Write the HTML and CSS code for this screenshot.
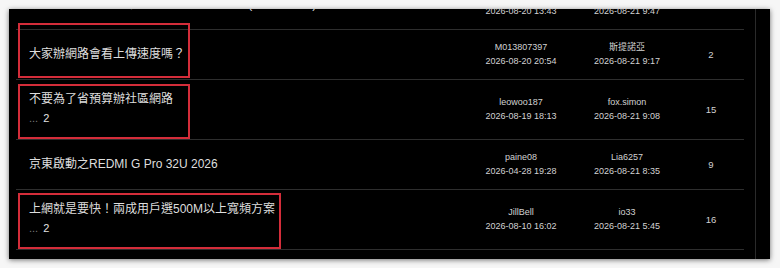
FILE: index.html
```html
<!DOCTYPE html>
<html lang="zh-Hant">
<head>
<meta charset="utf-8">
<title>討論區</title>
<link rel="stylesheet" href="styles.css">
</head>
<body>
<div class="panel">
  <div class="viewport">
    <div class="list">
      <div class="row">
        <div class="title">請問中華光世代網路升級後速度變慢怎辦 (附測速結果)</div>
        <div class="meta"><div>kevin0912</div><div>2026-08-20 13:43</div></div>
        <div class="meta"><div>netuser</div><div>2026-08-21 9:47</div></div>
        <div class="count">4</div>
      </div>
      <div class="row">
        <div class="title">大家辦網路會看上傳速度嗎？</div>
        <div class="meta"><div>M013807397</div><div>2026-08-20 20:54</div></div>
        <div class="meta"><div>斯提諾亞</div><div>2026-08-21 9:17</div></div>
        <div class="count">2</div>
        <span class="mark mark-a"></span>
      </div>
      <div class="row">
        <div class="title">不要為了省預算辦社區網路<div class="pages"><span class="dots">...</span> <span class="pg">2</span></div></div>
        <div class="meta"><div>leowoo187</div><div>2026-08-19 18:13</div></div>
        <div class="meta"><div>fox.simon</div><div>2026-08-21 9:08</div></div>
        <div class="count">15</div>
        <span class="mark mark-b"></span>
      </div>
      <div class="row">
        <div class="title">京東啟動之REDMI G Pro 32U 2026</div>
        <div class="meta"><div>paine08</div><div>2026-04-28 19:28</div></div>
        <div class="meta"><div>Lia6257</div><div>2026-08-21 8:35</div></div>
        <div class="count">9</div>
      </div>
      <div class="row">
        <div class="title">上網就是要快！兩成用戶選500M以上寬頻方案<div class="pages"><span class="dots">...</span> <span class="pg">2</span></div></div>
        <div class="meta"><div>JillBell</div><div>2026-08-10 16:02</div></div>
        <div class="meta"><div>io33</div><div>2026-08-21 5:45</div></div>
        <div class="count">16</div>
        <span class="mark mark-c"></span>
      </div>
    </div>
  </div>
  <div class="track"></div>
</div>
</body>
</html>
```

FILE: styles.css
```css
html, body {
  margin: 0;
  padding: 0;
}
body {
  background: #f6f6f6;
  width: 780px;
  height: 268px;
  overflow: hidden;
  font-family: "Liberation Sans", "Noto Sans CJK TC", Arial, sans-serif;
}
.panel {
  margin: 9px 0 0 9px;
  width: 761px;
  height: 250px;
  background: #000;
  box-shadow: 0 1px 5px rgba(0, 0, 0, 0.55);
  display: flex;
  overflow: hidden;
}
.viewport {
  width: 740px;
  padding-left: 7px;
  overflow: hidden;
}
.list {
  margin-top: -29px;
  width: 728px;
}
.row {
  position: relative;
  display: grid;
  grid-template-columns: 450px 110px 102px 66px;
  align-items: center;
  padding: 10px 0 11px;
  min-height: 28px;
  border-bottom: 1px solid #2e2e2e;
}
.title {
  padding-left: 13px;
  font-size: 12px;
  line-height: 19px;
  color: #dedede;
}
.pages {
  font-size: 11px;
  line-height: 19px;
}
.dots {
  color: #7a7a7a;
}
.pg {
  color: #e2e2e2;
  margin-left: 2px;
}
.meta {
  font-size: 9px;
  line-height: 14px;
  color: #d2d2d2;
  text-align: center;
}
.count {
  font-size: 9.5px;
  color: #d2d2d2;
  text-align: center;
}
.track {
  margin-left: 4px;
  width: 14px;
  border-left: 1px solid #2a2a2a;
}
.mark {
  position: absolute;
  border: 2px solid #d42d3a;
  box-sizing: border-box;
  left: 2px;
}
.mark-a {
  top: -7px;
  width: 172px;
  height: 55px;
}
.mark-b {
  top: 4px;
  width: 172px;
  height: 55px;
}
.mark-c {
  top: 3px;
  width: 263px;
  height: 56px;
}
```
